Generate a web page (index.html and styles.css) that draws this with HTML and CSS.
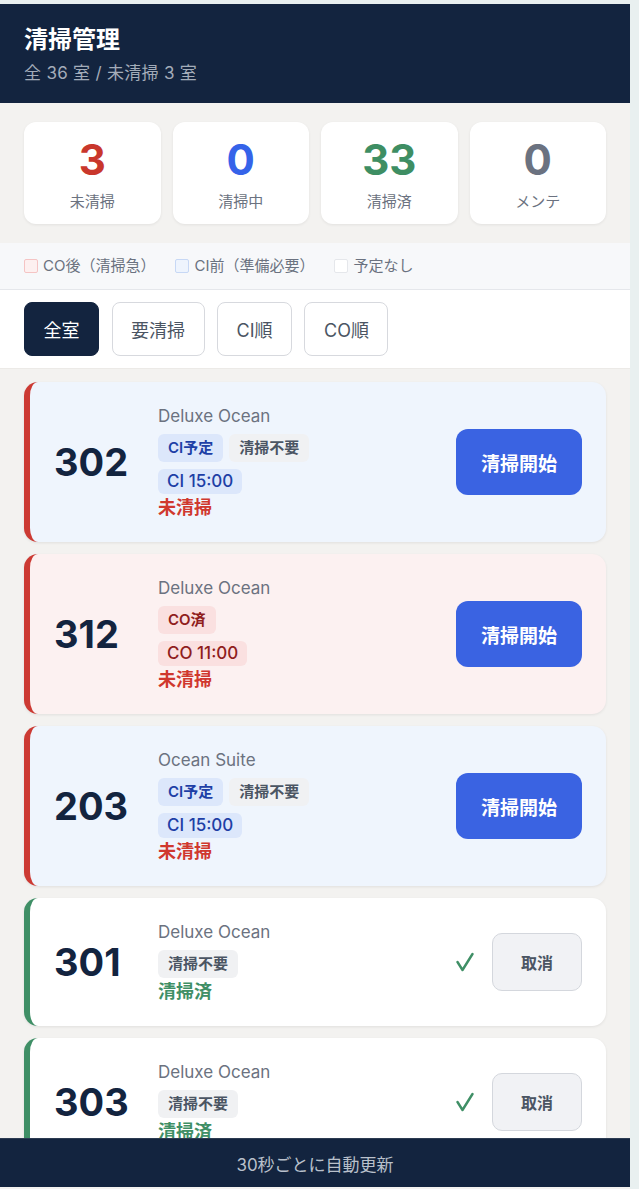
FILE: index.html
```html
<!DOCTYPE html>
<html lang="ja">
<head>
    <meta charset="UTF-8">
    <meta name="viewport" content="width=device-width, initial-scale=1.0">
    <title>清掃管理</title>
    <link rel="stylesheet" href="styles.css">
</head>
<body>
    <div class="app">
        <header class="top">
            <h1 class="top-title">清掃管理</h1>
            <p class="top-sub">全 36 室 / 未清掃 3 室</p>
        </header>

        <section class="stats">
            <div class="stat">
                <div class="stat-num red">3</div>
                <div class="stat-label">未清掃</div>
            </div>
            <div class="stat">
                <div class="stat-num blue">0</div>
                <div class="stat-label">清掃中</div>
            </div>
            <div class="stat">
                <div class="stat-num green">33</div>
                <div class="stat-label">清掃済</div>
            </div>
            <div class="stat">
                <div class="stat-num gray">0</div>
                <div class="stat-label">メンテ</div>
            </div>
        </section>

        <div class="legend">
            <span class="legend-item"><i class="swatch swatch-co"></i>CO後（清掃急）</span>
            <span class="legend-item"><i class="swatch swatch-ci"></i>CI前（準備必要）</span>
            <span class="legend-item"><i class="swatch swatch-none"></i>予定なし</span>
        </div>

        <nav class="filters">
            <button class="filter active">全室</button>
            <button class="filter">要清掃</button>
            <button class="filter">CI順</button>
            <button class="filter">CO順</button>
        </nav>

        <main class="rooms">
            <div class="room room-ci">
                <div class="room-no">302</div>
                <div class="room-info">
                    <div class="room-type">Deluxe Ocean</div>
                    <div class="tags">
                        <span class="tag tag-ci">CI予定</span>
                        <span class="tag tag-none">清掃不要</span>
                    </div>
                    <span class="time time-ci">CI 15:00</span>
                    <div class="status dirty">未清掃</div>
                </div>
                <button class="btn-start">清掃開始</button>
            </div>

            <div class="room room-co">
                <div class="room-no">312</div>
                <div class="room-info">
                    <div class="room-type">Deluxe Ocean</div>
                    <div class="tags">
                        <span class="tag tag-co">CO済</span>
                    </div>
                    <span class="time time-co">CO 11:00</span>
                    <div class="status dirty">未清掃</div>
                </div>
                <button class="btn-start">清掃開始</button>
            </div>

            <div class="room room-ci">
                <div class="room-no">203</div>
                <div class="room-info">
                    <div class="room-type">Ocean Suite</div>
                    <div class="tags">
                        <span class="tag tag-ci">CI予定</span>
                        <span class="tag tag-none">清掃不要</span>
                    </div>
                    <span class="time time-ci">CI 15:00</span>
                    <div class="status dirty">未清掃</div>
                </div>
                <button class="btn-start">清掃開始</button>
            </div>

            <div class="room room-done">
                <div class="room-no">301</div>
                <div class="room-info">
                    <div class="room-type">Deluxe Ocean</div>
                    <div class="tags">
                        <span class="tag tag-none">清掃不要</span>
                    </div>
                    <div class="status clean">清掃済</div>
                </div>
                <div class="done-actions">
                    <svg class="check" width="18" height="20" viewBox="0 0 18 20"><polyline points="1.5,10 6.5,18 16.5,2" fill="none" stroke="#3f8f66" stroke-width="2.4" stroke-linecap="round" stroke-linejoin="round"/></svg>
                    <button class="btn-cancel">取消</button>
                </div>
            </div>

            <div class="room room-done">
                <div class="room-no">303</div>
                <div class="room-info">
                    <div class="room-type">Deluxe Ocean</div>
                    <div class="tags">
                        <span class="tag tag-none">清掃不要</span>
                    </div>
                    <div class="status clean">清掃済</div>
                </div>
                <div class="done-actions">
                    <svg class="check" width="18" height="20" viewBox="0 0 18 20"><polyline points="1.5,10 6.5,18 16.5,2" fill="none" stroke="#3f8f66" stroke-width="2.4" stroke-linecap="round" stroke-linejoin="round"/></svg>
                    <button class="btn-cancel">取消</button>
                </div>
            </div>
        </main>

        <footer class="foot">30秒ごとに自動更新</footer>
    </div>
</body>
</html>
```

FILE: styles.css
```css
html {
    background-color: #e9f0f0;
}
body {
    font-family: Inter, "Noto Sans CJK JP", sans-serif;
    margin: 4px 0 0;
    width: 630px;
    background-color: #f3f2f0;
    color: #13243f;
}
.top {
    background-color: #13243f;
    padding: 20px 24px 19px;
}
.top-title {
    margin: 0;
    font-size: 24px;
    line-height: 32px;
    font-weight: 700;
    color: #fff;
}
.top-sub {
    margin: 6px 0 0;
    font-size: 17px;
    line-height: 22px;
    letter-spacing: 0.3px;
    color: #a3acb9;
}
.stats {
    display: grid;
    grid-template-columns: repeat(4, 1fr);
    gap: 12px;
    padding: 19px 24px;
}
.stat {
    background-color: #fff;
    border-radius: 12px;
    box-shadow: 0 1px 3px rgba(0,0,0,0.07);
    padding: 14px 8px 12px;
    text-align: center;
}
.stat-num {
    font-size: 42px;
    line-height: 48px;
    font-weight: 700;
}
.stat-label {
    margin-top: 8px;
    font-size: 15px;
    line-height: 20px;
    color: #6b7280;
}
.red { color: #c9372c; }
.blue { color: #3563e9; }
.green { color: #3e8e63; }
.gray { color: #6b7280; }
.legend {
    display: flex;
    gap: 20px;
    padding: 13px 24px;
    background-color: #f7f8fa;
    border-bottom: 1px solid #e5e7eb;
    font-size: 15px;
    line-height: 20px;
    color: #6b7280;
}
.legend-item {
    display: flex;
    align-items: center;
}
.swatch {
    display: inline-block;
    width: 12px;
    height: 12px;
    border-radius: 2px;
    margin-right: 5px;
    border: 1px solid #e5e7eb;
    background-color: #fff;
}
.swatch-co {
    background-color: #fdf0f0;
    border-color: #f5c4c4;
}
.swatch-ci {
    background-color: #eef4fd;
    border-color: #c7d8f5;
}
.filters {
    display: flex;
    gap: 12.5px;
    padding: 12px 24px;
    background-color: #fff;
    border-bottom: 1px solid #eceae7;
}
.filter {
    font-family: inherit;
    height: 54px;
    padding: 0 18.5px;
    font-size: 18px;
    border: 1px solid #d7d9de;
    border-radius: 8px;
    background-color: #fff;
    color: #4b5563;
    cursor: pointer;
}
.filter.active {
    background-color: #13243f;
    border-color: #13243f;
    color: #fff;
}
.rooms {
    display: flex;
    flex-direction: column;
    gap: 12px;
    padding: 13px 24px 80px;
}
.room {
    display: flex;
    align-items: center;
    padding: 22px 24px;
    border-left: 6px solid #cc3a33;
    border-radius: 14px;
    background-color: #fff;
    box-shadow: 0 1px 3px rgba(0,0,0,0.08);
}
.room-ci {
    background-color: #eff5fd;
}
.room-co {
    background-color: #fcf1f1;
}
.room-done {
    border-left-color: #3f8f66;
}
.room-no {
    width: 104px;
    font-size: 38px;
    line-height: 1;
    font-weight: 700;
    color: #13243f;
}
.room-info {
    flex: 1;
    display: flex;
    flex-direction: column;
    align-items: flex-start;
}
.room-type {
    font-size: 17px;
    line-height: 24px;
    color: #6b7280;
}
.tags {
    display: flex;
    gap: 6px;
    margin-top: 6px;
}
.tag {
    padding: 4px 10px;
    font-size: 15px;
    line-height: 20px;
    font-weight: 600;
    border-radius: 6px;
}
.tag-ci {
    background-color: #dce7fb;
    color: #1e3fa6;
}
.tag-co {
    background-color: #fae0e0;
    color: #8f1d1d;
}
.tag-none {
    background-color: #f0f1f3;
    color: #4b5563;
}
.time {
    margin-top: 7px;
    padding: 3px 9px;
    font-size: 17px;
    line-height: 19px;
    font-weight: 500;
    border-radius: 6px;
}
.time-ci {
    background-color: #dce7fb;
    color: #1e3fa6;
}
.time-co {
    background-color: #fae0e0;
    color: #8f1d1d;
}
.status {
    margin-top: 2px;
    font-size: 18px;
    line-height: 24px;
    font-weight: 700;
}
.status.dirty {
    color: #d0382e;
}
.status.clean {
    color: #3f8f66;
}
.btn-start {
    font-family: inherit;
    width: 126px;
    height: 66px;
    border: none;
    border-radius: 12px;
    background-color: #3a63e2;
    color: #fff;
    font-size: 19px;
    font-weight: 700;
    cursor: pointer;
}
.done-actions {
    display: flex;
    align-items: center;
    gap: 18px;
}
.btn-cancel {
    font-family: inherit;
    width: 90px;
    height: 58px;
    border: 1.5px solid #d4d7dd;
    border-radius: 10px;
    background-color: #f1f2f5;
    color: #4b5563;
    font-size: 16px;
    font-weight: 700;
    cursor: pointer;
}
.foot {
    position: fixed;
    left: 0;
    bottom: 2px;
    width: 630px;
    height: 49px;
    display: flex;
    align-items: center;
    justify-content: center;
    background-color: #13243f;
    border-top: 1px solid #2c3b52;
    box-sizing: border-box;
    font-size: 17px;
    color: #b9c0cb;
}
```
